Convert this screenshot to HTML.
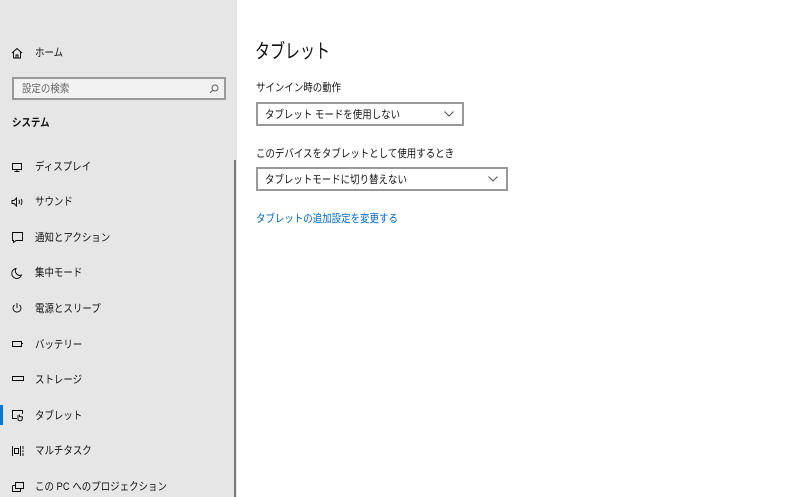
<!DOCTYPE html>
<html><head><meta charset="utf-8"><style>
*{margin:0;padding:0;box-sizing:border-box}
body{width:800px;height:497px;overflow:hidden;background:#fff;font-family:"Liberation Sans","Noto Sans CJK JP",sans-serif;color:#000;position:relative}
.side{position:absolute;left:0;top:0;width:237px;height:497px;background:#e6e6e6}
.sb{position:absolute;left:234px;top:160px;width:2px;height:337px;background:#7a7a7a}
.t{position:absolute;font-size:11px;white-space:nowrap;line-height:14px;transform:scaleX(0.86);transform-origin:0 0;color:#111}
.ic{position:absolute;left:11px}
.ic path,.ic circle{stroke-width:0.9}
.search{position:absolute;left:12px;top:77px;width:214px;height:23px;border:2px solid #999;background:#f2f2f2}
.dd{position:absolute;height:24px;border:2px solid #999;background:#fff}
.chev{position:absolute;right:8px;top:7px}
.sel{position:absolute;left:0;top:405px;width:3px;height:20px;background:#0078d7}
</style></head><body>
<div class="side">
<svg class="ic" style="top:47px" width="12" height="12" viewBox="0 0 12 12" fill="none" stroke="#000"><path d="M1 6 L6 1.5 L11 6 M2.5 5 V11 H9.5 V5 M5 11 V8 H7 V11"/></svg>
<div class="t" style="left:35px;top:46px">ホーム</div>
<div class="search"><div class="t" style="left:8px;top:3px;color:#666">設定の検索</div>
<svg style="position:absolute;right:5px;top:5px" width="10" height="10" viewBox="0 0 10 10" fill="none" stroke="#555" stroke-width="0.9"><circle cx="6" cy="4" r="3"/><path d="M4 6 L1 9"/></svg></div>
<div class="t" style="left:12px;top:116px;font-weight:bold">システム</div>
<div class="sb"></div>
<div class="sel"></div>
<svg class="ic" style="top:161px" width="12" height="12" fill="none" stroke="#000"><path d="M1.5 2.5 H10.5 V8.5 H1.5 Z M6 8.5 V10.5 M3.5 10.5 H8.5"/></svg>
<div class="t" style="left:35px;top:160px">ディスプレイ</div>
<svg class="ic" style="top:196px" width="14" height="12" fill="none" stroke="#000"><path d="M1 4.5 H3 L5.5 2 V10 L3 7.5 H1 Z M8 4 Q9 6 8 8 M10 3 Q12 6 10 9"/></svg>
<div class="t" style="left:35px;top:195px">サウンド</div>
<svg class="ic" style="top:231px" width="13" height="13" fill="none" stroke="#000"><path d="M1.5 1.5 H11.5 V9.5 H5 L2.5 11.5 V9.5 H1.5 Z"/></svg>
<div class="t" style="left:35px;top:231px">通知とアクション</div>
<svg class="ic" style="top:267px" width="12" height="12" fill="none" stroke="#000"><path d="M5 1.5 A5 5 0 1 0 10.5 8 A4.5 4.5 0 0 1 5 1.5 Z"/></svg>
<div class="t" style="left:35px;top:266px">集中モード</div>
<svg class="ic" style="top:302px" width="12" height="12" fill="none" stroke="#000"><path d="M6 1 V6 M3.5 3 A4 4 0 1 0 8.5 3"/></svg>
<div class="t" style="left:35px;top:302px">電源とスリープ</div>
<svg class="ic" style="top:339px" width="14" height="10" fill="none" stroke="#000"><path d="M1.5 2.5 H10.5 V7.5 H1.5 Z M10.5 4.5 H12"/></svg>
<div class="t" style="left:35px;top:338px">バッテリー</div>
<svg class="ic" style="top:375px" width="14" height="8" fill="none" stroke="#000"><path d="M1.5 1.5 H12.5 V5.5 H1.5 Z"/></svg>
<div class="t" style="left:35px;top:373px">ストレージ</div>
<svg class="ic" style="top:409px" width="14" height="13" fill="none" stroke="#000"><path d="M6 9.5 H1.5 V1.5 H11.5 V5 M7 6 V11 Q9 12.5 11 11 L11.5 8 L8.5 7.5 V5.5"/></svg>
<div class="t" style="left:35px;top:409px">タブレット</div>
<svg class="ic" style="top:445px" width="14" height="12" fill="none" stroke="#000"><path d="M1.5 1 V11 M9.5 1 V11 M3.5 3.5 H7.5 V8.5 H3.5 Z M12 1 V4 M12 5 V7 M12 8 V11"/></svg>
<div class="t" style="left:35px;top:444px">マルチタスク</div>
<svg class="ic" style="top:481px" width="14" height="12" fill="none" stroke="#000"><path d="M4.5 1.5 H12.5 V7.5 H4.5 Z M1.5 4.5 H4.5 M1.5 4.5 V10.5 H9.5 V7.5"/></svg>
<div class="t" style="left:35px;top:480px">この PC へのプロジェクション</div>
</div>
<div class="t" style="left:255px;top:39px;font-size:20px;line-height:26px;transform:scaleX(0.75)">タブレット</div>
<div class="t" style="left:256px;top:81px">サインイン時の動作</div>
<div class="dd" style="left:256px;top:102px;width:208px"><div class="t" style="left:7px;top:4px">タブレット モードを使用しない</div>
<svg class="chev" width="10" height="6" fill="none" stroke="#555"><path d="M0.5 0.5 L5 5 L9.5 0.5"/></svg></div>
<div class="t" style="left:256px;top:147px">このデバイスをタブレットとして使用するとき</div>
<div class="dd" style="left:256px;top:167px;width:252px"><div class="t" style="left:7px;top:4px">タブレットモードに切り替えない</div>
<svg class="chev" width="10" height="6" fill="none" stroke="#555"><path d="M0.5 0.5 L5 5 L9.5 0.5"/></svg></div>
<div class="t" style="left:256px;top:212px;color:#0067c0">タブレットの追加設定を変更する</div>
</body></html>
